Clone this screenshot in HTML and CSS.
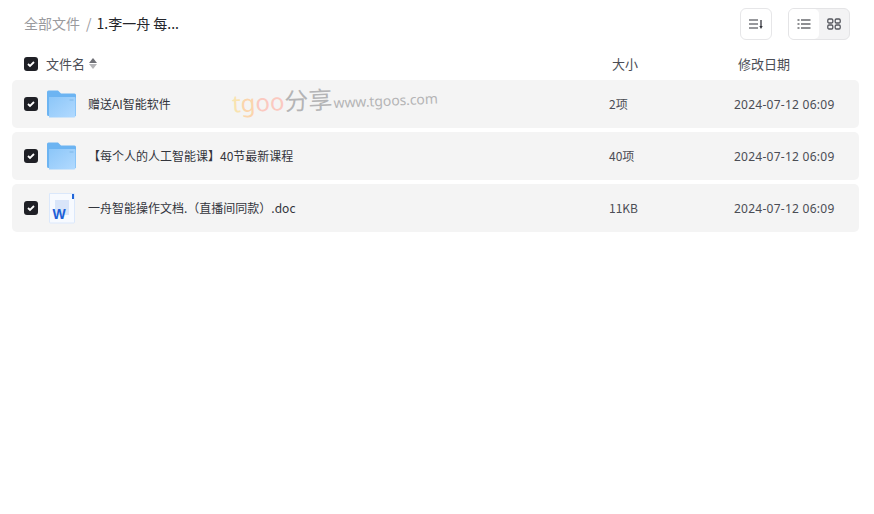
FILE: index.html
```html
<!DOCTYPE html>
<html lang="zh-CN">
<head>
  <meta charset="UTF-8" />
  <title>全部文件</title>
  <link rel="stylesheet" href="styles.css">
</head>
<body>
  <svg class="defs" width="0" height="0">
    <defs>
      <linearGradient id="folderFill" x1="0" y1="0" x2="1" y2="1">
        <stop offset="0" stop-color="#8cc6f8"/>
        <stop offset="1" stop-color="#b2daff"/>
      </linearGradient>
    </defs>
  </svg>
  <div class="page">
    <!-- top bar -->
    <div class="toolbar">
      <div class="crumbs">
        <span class="crumb-root">全部文件</span>
        <span class="crumb-sep">/</span>
        <span class="crumb-current">1.李一舟 每...</span>
      </div>
      <div class="tools">
        <button class="tool-btn">
          <svg width="14" height="12" viewBox="0 0 14 12"><path d="M0 2h9M0 6h9M0 10h9" stroke="#33353c" stroke-width="1.2" fill="none"/><path d="M12 2v7" stroke="#33353c" stroke-width="1.3"/><path d="M10.300 8h3.400L12 11z" fill="#33353c"/></svg>
        </button>
        <div class="view-switch">
          <span class="view-item active">
            <svg width="14" height="10" viewBox="0 0 14 10"><path d="M4 1h9.500M4 5h9.500M4 9h9.500" stroke="#1f2026" stroke-width="1.2" fill="none"/><path d="M.5 1h2M.5 5h2M.5 9h2" stroke="#1f2026" stroke-width="1.2" fill="none"/></svg>
          </span>
          <span class="view-item">
            <svg width="14" height="12" viewBox="0 0 14 12" fill="none" stroke="#55575e" stroke-width="1.3"><rect x=".8" y="1" width="5" height="4" rx="1.2"/><rect x="8.200" y="1" width="5" height="4" rx="1.2"/><rect x=".8" y="7" width="5" height="4" rx="1.2"/><rect x="8.200" y="7" width="5" height="4" rx="1.2"/></svg>
          </span>
        </div>
      </div>
    </div>

    <!-- column heads -->
    <div class="list-head">
      <span class="check"><svg width="10" height="8" viewBox="0 0 10 8"><path d="M2 4l2 2L8 2" stroke="#fff" stroke-width="1.8" fill="none"/></svg></span>
      <span class="head-name">文件名</span>
      <span class="sort-arrows"></span>
      <span class="head-size">大小</span>
      <span class="head-date">修改日期</span>
    </div>

    <div class="list">
      <div class="row">
        <span class="check"><svg width="10" height="8" viewBox="0 0 10 8"><path d="M2 4l2 2L8 2" stroke="#fff" stroke-width="1.8" fill="none"/></svg></span>
        <svg class="file-icon" width="30" height="28" viewBox="0 0 30 28"><path d="M0 2a1.500 1.500 0 0 1 1.500-1.500h9.500l3 3h13.500a1.500 1.500 0 0 1 1.500 1.500v21H1.500A1.500 1.500 0 0 1 0 24.500z" fill="#6cb4f2"/><path d="M2 7h25.500a1 1 0 0 1 1 1v18a1.500 1.500 0 0 1-1.500 1.500H2z" fill="url(#folderFill)"/><rect x="22.500" y="9" width="4" height="2" fill="#8fc4f2"/></svg>
        <span class="row-name">赠送AI智能软件</span>
        <span class="row-size">2项</span>
        <span class="row-date">2024-07-12 06:09</span>
      </div>
      <div class="row">
        <span class="check"><svg width="10" height="8" viewBox="0 0 10 8"><path d="M2 4l2 2L8 2" stroke="#fff" stroke-width="1.8" fill="none"/></svg></span>
        <svg class="file-icon" width="30" height="28" viewBox="0 0 30 28"><path d="M0 2a1.500 1.500 0 0 1 1.500-1.500h9.500l3 3h13.500a1.500 1.500 0 0 1 1.500 1.500v21H1.500A1.500 1.500 0 0 1 0 24.500z" fill="#6cb4f2"/><path d="M2 7h25.500a1 1 0 0 1 1 1v18a1.500 1.500 0 0 1-1.500 1.500H2z" fill="url(#folderFill)"/><rect x="22.500" y="9" width="4" height="2" fill="#8fc4f2"/></svg>
        <span class="row-name">【每个人的人工智能课】40节最新课程</span>
        <span class="row-size">40项</span>
        <span class="row-date">2024-07-12 06:09</span>
      </div>
      <div class="row">
        <span class="check"><svg width="10" height="8" viewBox="0 0 10 8"><path d="M2 4l2 2L8 2" stroke="#fff" stroke-width="1.8" fill="none"/></svg></span>
        <svg class="file-icon" width="30" height="32" viewBox="0 0 30 32"><path d="M2.500 1.500h25v28.500a1 1 0 0 1-1 1h-23a1 1 0 0 1-1-1z" fill="#f7faff" stroke="#dbe8fb"/><rect x="8" y="8" width="14" height="15" fill="#d9e5f9"/><rect x="25" y="2" width="2" height="5" fill="#2266d8"/><text x="5.500" y="27" class="word-mark">W</text></svg>
        <span class="row-name">一舟智能操作文档.（直播间同款）.doc</span>
        <span class="row-size">11KB</span>
        <span class="row-date">2024-07-12 06:09</span>
      </div>
    </div>

    <div class="watermark"><span class="wm-t">t</span><span class="wm-g">g</span><span class="wm-o">oo</span><span class="wm-cn">分享</span><span class="wm-url">www.tgoos.com</span></div>
  </div>
</body>
</html>
```

FILE: styles.css
```css
body {
  margin: 0;
  background: #fff;
  font-family: "Noto Sans CJK SC", "Noto Sans", sans-serif;
  color: #33353c;
}
.defs {
  position: absolute;
}
.page {
  position: relative;
  width: 847px;
  margin-left: 12px;
}
.toolbar {
  display: flex;
  justify-content: space-between;
  align-items: center;
  height: 48px;
  padding: 0 9px 0 12px;
}
.crumbs {
  display: flex;
  align-items: center;
  font-size: 14px;
  padding-bottom: 2px;
}
.crumb-root {
  color: #9a9a9e;
}
.crumb-sep {
  color: #9a9a9e;
  margin: 0 5px 0 6px;
}
.crumb-current {
  color: #25262b;
}
.tools {
  display: flex;
  gap: 16px;
}
.tool-btn {
  width: 32px;
  height: 32px;
  padding: 0;
  background: #fff;
  border: 1px solid #e6e6e8;
  border-radius: 6px;
  display: flex;
  align-items: center;
  justify-content: center;
}
.view-switch {
  display: flex;
  width: 62px;
  height: 32px;
  box-sizing: border-box;
  background: #f3f3f4;
  border: 1px solid #e4e4e6;
  border-radius: 6px;
}
.view-item {
  flex: 1;
  display: flex;
  align-items: center;
  justify-content: center;
  border-radius: 5px;
}
.view-item.active {
  background: #fff;
}
.list-head {
  display: flex;
  align-items: center;
  height: 32px;
  padding-left: 12px;
  font-size: 13px;
  color: #4b4d55;
}
.list-head span:not(.check) {
  margin-bottom: 2px;
}
.check {
  flex: none;
  width: 14px;
  height: 14px;
  background: #1f2026;
  border-radius: 3px;
  display: flex;
  align-items: center;
  justify-content: center;
}
.head-name {
  margin-left: 8px;
}
.sort-arrows {
  position: relative;
  width: 8px;
  height: 11px;
  margin-left: 4px;
}
.sort-arrows::before,
.sort-arrows::after {
  content: "";
  position: absolute;
  left: 0;
  border-left: 4px solid transparent;
  border-right: 4px solid transparent;
}
.sort-arrows::before {
  top: 0;
  border-bottom: 5px solid #6f7076;
}
.sort-arrows::after {
  bottom: 0;
  border-top: 5px solid #b5b5b8;
}
.head-size {
  margin-left: 515px;
  width: 126px;
}
.list {
  display: flex;
  flex-direction: column;
  gap: 4px;
}
.row {
  display: flex;
  align-items: center;
  height: 48px;
  padding-left: 12px;
  background: #f4f4f4;
  border-radius: 5px;
  font-size: 12px;
  color: #33353c;
}
.file-icon {
  flex: none;
  margin-left: 9px;
  margin-right: 11px;
}
.row-name {
  width: 521px;
  white-space: nowrap;
  padding-bottom: 2px;
}
.row-size {
  width: 125px;
  color: #4b4d55;
  padding-bottom: 2px;
}
.row-date {
  color: #4b4d55;
  font-family: "Noto Sans", sans-serif;
  letter-spacing: 0.26px;
  white-space: nowrap;
}
.word-mark {
  font-family: "Liberation Sans", sans-serif;
  font-size: 14px;
  font-weight: 700;
  fill: #1d5fd6;
}
.watermark {
  position: absolute;
  left: 220px;
  top: 81px;
  display: flex;
  align-items: baseline;
  white-space: nowrap;
  transform: rotate(-2.500deg);
  font-family: "Noto Sans", "Noto Sans CJK SC", sans-serif;
  font-size: 24px;
  line-height: 34px;
}
.wm-t {
  color: #f9e3b0;
}
.wm-g {
  color: #fbd5ac;
}
.wm-o {
  color: #fbc9c0;
}
.wm-cn {
  color: #b4b4b6;
  font-family: "Noto Sans CJK SC", sans-serif;
}
.wm-url {
  color: #b4b4b6;
  font-size: 14px;
  letter-spacing: -0.1px;
  margin-left: 1px;
}
```
